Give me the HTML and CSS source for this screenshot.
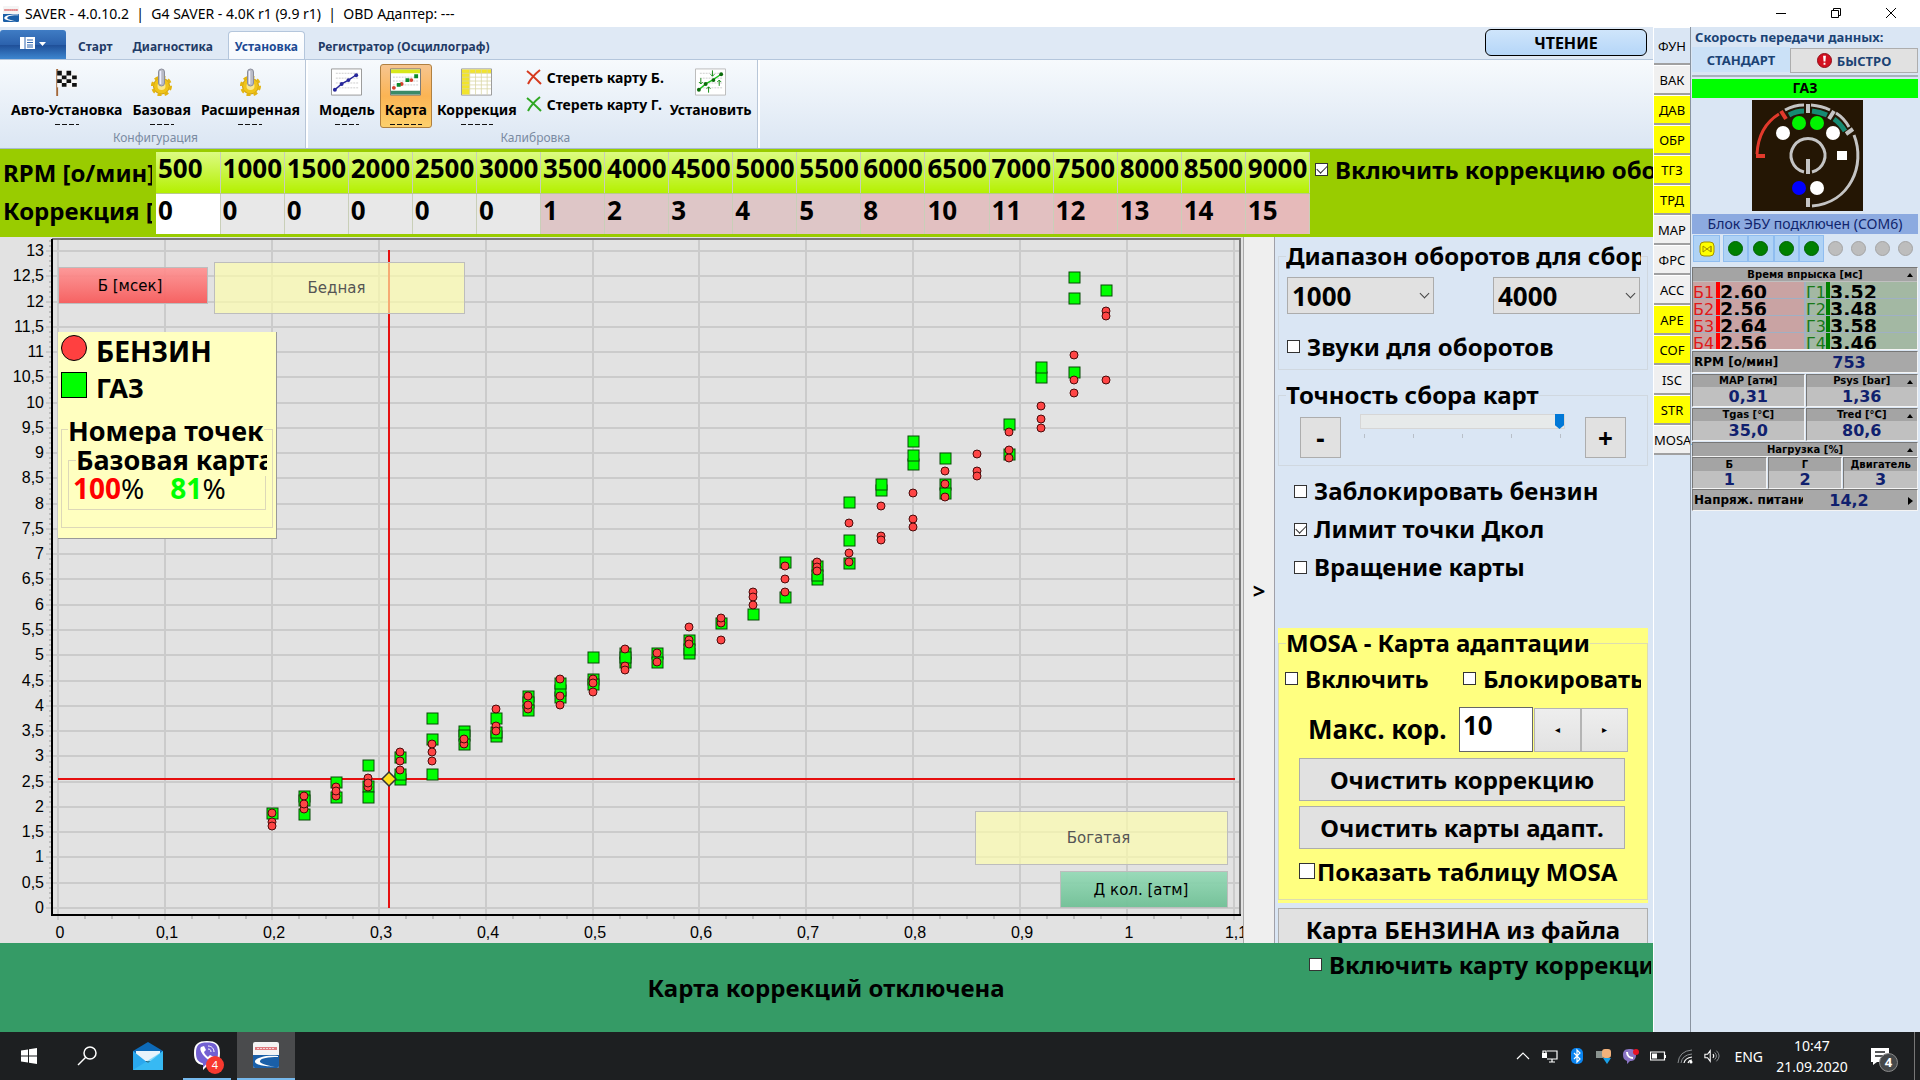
FILE: index.html
```html
<!DOCTYPE html>
<html lang="ru">
<head>
<meta charset="utf-8">
<title>SAVER - 4.0.10.2</title>
<link rel="stylesheet" href="styles.css">
</head>
<body>
<svg class="defs" aria-hidden="true">
  <defs>
    <symbol id="logo" viewBox="0 0 26 26"><rect width="26" height="26" rx="2" fill="#f4f4f4"/><path d="M0 13h26v11q0 2-2 2H2q-2 0-2-2z" fill="#1a5fa8"/><path d="M25 14C14 13 4 15 2 19c-1 4 10 5 20 6C12 23 6 21 7 19c1-3 8-4 18-4z" fill="#fff"/><path d="M2 5h22v3H2z" fill="#d9535a" opacity=".75"/><path d="M4 6.500h18" stroke="#fff" stroke-dasharray="2 1" opacity=".7"/></symbol>
    <symbol id="gear" viewBox="0 0 24 28"><circle cx="12" cy="18" r="8" fill="#f0c419" stroke="#c79a10" stroke-width="1"/><circle cx="12" cy="18" r="9" fill="none" stroke="#e3b512" stroke-width="3" stroke-dasharray="4 3"/><circle cx="12" cy="18" r="4" fill="#fbe88a"/><rect x="9" y="1" width="6" height="17" rx="3" fill="#b9bbc6" stroke="#8a8c99"/><path d="M11 3v13" stroke="#eef" stroke-width="1.500"/></symbol>
    <symbol id="cross" viewBox="0 0 16 16"><path d="M1 2c5 4 9 8 14 13M14 1C9 5 5 9 2 15" fill="none" stroke="currentColor" stroke-width="2"/></symbol>
    <symbol id="viber" viewBox="0 0 28 30"><path d="M14 1c9 0 13 3 13 12s-4 12-12 12l-5 5v-5C3 24 1 20 1 13 1 4 5 1 14 1z" fill="#fff"/><path d="M14 2.500c8 0 11 2 11 10.500s-4 10.500-11 10.500l-4 4v-4C5 22 3 19 3 13 3 5 6 2.500 14 2.500z" fill="#7360d2"/><path d="M8 7l3-1 2 4-2 2c1 3 3 4 4 5l2-2 4 2-1 3c-2 2-5 0-8-3S6 9 8 7z" fill="#fff"/><path d="M15 6c4 0 6 3 6 6M15 9c2 0 3 1 3 3" fill="none" stroke="#fff"/></symbol>
  </defs>
</svg>

<header class="titlebar">
  <svg class="titlebar-logo"><use href="#logo"/></svg>
  <span class="titlebar-text">SAVER - 4.0.10.2&nbsp; |&nbsp; G4 SAVER - 4.0K r1 (9.9 r1)&nbsp; |&nbsp; OBD Адаптер: ---</span>
  <div class="window-buttons">
    <button aria-label="Свернуть"><svg viewBox="0 0 12 12"><path d="M1 6.500h10"/></svg></button>
    <button aria-label="Восстановить"><svg viewBox="0 0 12 12"><path d="M1.500 3.500h7v7h-7zM3.500 3V1.500h7v7H9"/></svg></button>
    <button aria-label="Закрыть"><svg viewBox="0 0 12 12"><path d="M1 1l10 10M11 1L1 11"/></svg></button>
  </div>
</header>

<div class="workspace">
  <main class="work">
    <nav class="ribbon-tabs">
      <button class="app-menu" aria-label="Меню"><svg viewBox="0 0 28 14"><path d="M1 1h15v12H1z" fill="#fff"/><path d="M6 1v12" stroke="#2f65ae"/><path d="M8 4h6M8 6.500h6M8 9h6M8 11h6" stroke="#2f65ae"/><path d="M20 6h7l-3.500 4z" fill="#fff"/></svg></button>
      <button class="tab">Старт</button>
      <button class="tab">Диагностика</button>
      <button class="tab tab-active">Установка</button>
      <button class="tab">Регистратор (Осциллограф)</button>
      <button class="read-button">ЧТЕНИЕ</button>
    </nav>

    <section class="ribbon">
      <div class="ribbon-group">
        <div class="ribbon-items">
          <button class="tool">
            <svg viewBox="0 0 28 30"><path d="M4 1v29" stroke="#a4683a" stroke-width="2"/><path d="M4 3q6-3 11 0t11 0v18q-6 3-11 0T4 21z" fill="#f6f6f6"/><path d="M4 3h5v5H4zM14 3h5v5h-5zM9 8h5v4H9zM20 8h5v4h-5zM4 12h5v4H4zM14 12h5v4h-5zM9 16h5v4H9zM20 16h5v4h-5z" fill="#111"/></svg>
            Авто-Установка<span class="cut w24"></span></button>
          <button class="tool"><svg viewBox="0 0 24 28"><use href="#gear"/></svg>Базовая<span class="cut w24"></span></button>
          <button class="tool"><svg viewBox="0 0 24 28"><use href="#gear"/></svg>Расширенная<span class="cut w24"></span></button>
        </div>
        <div class="ribbon-caption">Конфигурация</div>
      </div>
      <div class="ribbon-group">
        <div class="ribbon-items">
          <button class="tool">
            <svg viewBox="0 0 32 28"><path d="M.5.500h31v27H.5z" fill="#fff" stroke="#999"/><path d="M5 5h24M5 10h24M5 15h24M5 20h24" stroke="#ccc" stroke-dasharray="2 1"/><path d="M4 22l7-6 7-4 9-6" fill="none" stroke="#27279b" stroke-width="1.500"/><g fill="#27279b"><circle cx="4" cy="22" r="2"/><circle cx="11" cy="16" r="2"/><circle cx="18" cy="12" r="2"/><circle cx="26" cy="7" r="2"/></g></svg>
            Модель<span class="cut w24"></span></button>
          <button class="tool tool-active">
            <svg viewBox="0 0 32 28"><path d="M.5.500h31v27H.5z" fill="#fff" stroke="#777"/><path d="M1 1h30v4H1z" fill="#d8e81a"/><path d="M1 23h30v4H1z" fill="#3a8a68"/><path d="M3 9h26M3 13h26M3 17h26" stroke="#ccc" stroke-dasharray="2 1"/><g fill="#d6402c"><circle cx="4" cy="20" r="2"/><circle cx="12" cy="16" r="2"/><circle cx="22" cy="12" r="2"/></g><path d="M7 15h4v4H7zM16 10h4v4h-4zM25 6h4v4h-4z" fill="#0a8a2a"/></svg>
            Карта<span class="cut w32"></span></button>
          <button class="tool">
            <svg viewBox="0 0 32 28"><path d="M.5.500h31v27H.5z" fill="#fff" stroke="#999"/><path d="M1 1h30v4H1zM1 5h8v22H1z" fill="#f2e42c"/><path d="M9 1v26M15 1v26M21 1v26M27 1v26M1 5h30M1 9h30M1 13h30M1 17h30M1 21h30" stroke="#d9d6a4" stroke-width=".800"/></svg>
            Коррекция<span class="cut w32"></span></button>
          <div class="clear-tools">
            <button><svg class="red"><use href="#cross"/></svg>Стереть карту Б.</button>
            <button><svg class="green"><use href="#cross"/></svg>Стереть карту Г.</button>
          </div>
          <button class="tool">
            <svg viewBox="0 0 32 28"><path d="M.5.500h31v27H.5z" fill="#fff" stroke="#bbb"/><path d="M5 5h24M5 10h24M5 15h24M5 20h24" stroke="#ccc" stroke-dasharray="2 1"/><path d="M4 22l7-6 7-4 9-6" fill="none" stroke="#1dc01d" stroke-width="1.500"/><g fill="#0b6b0b"><circle cx="4" cy="22" r="2"/><circle cx="11" cy="16" r="2"/><circle cx="19" cy="12" r="2"/><circle cx="27" cy="6" r="2"/></g><path d="M6 10v6m-2-2l2 2 2-2M18 2v6m-2-2l2 2 2-2M14 25v-6m-2 2l2-2 2 2M25 18v-6m-2 2l2-2 2 2" fill="none" stroke="#128a12"/></svg>
            Установить</button>
        </div>
        <div class="ribbon-caption">Калибровка</div>
      </div>
    </section>

    <section class="rpm">
      <div class="rpm-labels"><span>RPM [о/мин]</span><span>Коррекция [%]</span></div>
      <div class="rpm-grid">
        <table class="rpm-table">
          <tr><th>500</th><th>1000</th><th>1500</th><th>2000</th><th>2500</th><th>3000</th><th>3500</th><th>4000</th><th>4500</th><th>5000</th><th>5500</th><th>6000</th><th>6500</th><th>7000</th><th>7500</th><th>8000</th><th>8500</th><th>9000</th></tr>
          <tr><td class="current">0</td><td>0</td><td>0</td><td>0</td><td>0</td><td>0</td><td class="p1">1</td><td class="p1">2</td><td class="p1">3</td><td class="p1">4</td><td class="p1">5</td><td class="p2">8</td><td class="p2">10</td><td class="p2">11</td><td class="p3">12</td><td class="p3">13</td><td class="p3">14</td><td class="p3">15</td></tr>
        </table>
      </div>
      <label class="check rpm-check"><input type="checkbox" checked><span>Включить коррекцию оборотов</span></label>
    </section>

    <div class="middle">
      <section class="chart">
        <svg id="plot" viewBox="0 237 1243 706" role="img" aria-label="Карта"></svg>
        <div class="tag tag-petrol">Б [мсек]</div>
        <div class="tag tag-lean">Бедная</div>
        <div class="tag tag-rich">Богатая</div>
        <div class="tag tag-map">Д кол. [атм]</div>
        <aside class="legend">
          <div class="legend-row"><i class="dot"></i>БЕНЗИН</div>
          <div class="legend-row"><i class="box"></i>ГАЗ</div>
          <fieldset class="points"><legend>Номера точек</legend>
            <fieldset class="base"><legend>Базовая карта</legend>
              <div class="percents"><span><b class="petrol">100</b>%</span><span><b class="gas">81</b>%</span></div>
            </fieldset>
          </fieldset>
        </aside>
      </section>
      <button class="splitter" aria-label="Скрыть панель">&gt;</button>
      <section class="settings">
        <fieldset class="group">
          <legend>Диапазон оборотов для сбора</legend>
          <div class="selects">
            <span class="select"><select aria-label="От"><option>1000</option></select></span>
            <span class="select"><select aria-label="До"><option>4000</option></select></span>
          </div>
          <label class="check"><input type="checkbox"><span>Звуки для оборотов</span></label>
        </fieldset>
        <fieldset class="group accuracy">
          <legend>Точность сбора карт</legend>
          <div class="slider-row">
            <button class="step">-</button>
            <div class="slider"><input type="range" min="0" max="4" value="4" aria-label="Точность"><div class="ticks"><i></i><i></i><i></i><i></i><i></i></div></div>
            <button class="step">+</button>
          </div>
        </fieldset>
        <div class="options">
          <label class="check"><input type="checkbox"><span>Заблокировать бензин</span></label>
          <label class="check"><input type="checkbox" checked><span>Лимит точки Дкол</span></label>
          <label class="check"><input type="checkbox"><span>Вращение карты</span></label>
        </div>
        <div class="mosa">
          <fieldset class="group">
            <legend>MOSA - Карта адаптации</legend>
            <div class="mosa-checks">
              <label class="check"><input type="checkbox"><span>Включить</span></label>
              <label class="check"><input type="checkbox"><span>Блокировать</span></label>
            </div>
            <div class="max">
              <label for="max">Макс. кор.</label>
              <input id="max" type="text" value="10">
              <button aria-label="Меньше">◂</button><button aria-label="Больше">▸</button>
            </div>
            <button class="wide">Очистить коррекцию</button>
            <button class="wide">Очистить карты адапт.</button>
            <label class="check show-table"><input type="checkbox"><span>Показать таблицу MOSA</span></label>
          </fieldset>
        </div>
        <button class="file-button">Карта БЕНЗИНА из файла</button>
      </section>
    </div>

    <footer class="status">
      <strong>Карта коррекций отключена</strong>
      <label class="check"><input type="checkbox"><span>Включить карту коррекций</span></label>
    </footer>
  </main>

  <nav class="modes">
    <button class="mode mode-first">ФУН</button><button class="mode">ВАК</button><button class="mode on">ДАВ</button><button class="mode on">ОБР</button><button class="mode on">ТГЗ</button><button class="mode on">ТРД</button><button class="mode">МАР</button><button class="mode">ФРС</button><button class="mode">ACC</button><button class="mode on">APE</button><button class="mode on">COF</button><button class="mode">ISC</button><button class="mode on">STR</button><button class="mode">MOSA</button>
  </nav>

  <aside class="monitor">
    <h2>Скорость передачи данных:</h2>
    <div class="speed">
      <button class="std">СТАНДАРТ</button>
      <button class="fast"><svg viewBox="0 0 16 16"><circle cx="8" cy="8" r="7.500" fill="#d31020" stroke="#8d0b14"/><path d="M6.500 3h3l-.500 6h-2zM7 10.500h2v2H7z" fill="#fff"/></svg>БЫСТРО</button>
    </div>
    <div class="fuel">ГАЗ</div>
    <svg class="switch" viewBox="0 0 111 111"><rect width="111" height="111" fill="#241604"/>
      <g fill="none" stroke-width="3">
        <path d="M5 54C6 36 14 22 27 14" stroke="#e23a2c"/><path d="M4 56h9M29 11l5 8" stroke="#e23a2c" stroke-width="4"/>
        <path d="M33 10Q42 5 52 5M59 5Q70 6 78 10M84 13Q92 18 97 27M102 35C114 65 98 103 60 106" stroke="#c4c4c4"/>
        <path d="M37 15Q44 11 52 11M60 11Q68 12 75 15M82 19Q88 23 93 31" stroke="#168a72" stroke-width="5"/>
        <path d="M56 4v9M82 11l-5 8M101 29l-7 5M56 59v15M56 98v9" stroke="#c4c4c4" stroke-width="4"/>
        <path d="M52 72A17 17 0 1 1 60 72" stroke="#c4c4c4"/>
      </g>
      <circle cx="47" cy="23" r="7" fill="#00f400"/><circle cx="65" cy="23" r="7" fill="#00f400"/><circle cx="31" cy="33" r="7" fill="#fff"/><circle cx="81" cy="33" r="7" fill="#fff"/><circle cx="47" cy="88" r="7" fill="#00f"/><circle cx="65" cy="88" r="7" fill="#fff"/><path d="M85 51h10v9H85z" fill="#fff"/>
    </svg>
    <div class="ecu">Блок ЭБУ подключен (COM6)</div>
    <div class="leds">
      <span class="led-cell lit cfg"><svg viewBox="0 0 16 16"><rect x="1" y="1" width="14" height="14" rx="4" fill="#ff0" stroke="#a39000"/><path d="M4 5v6l8-6v6L4 5M12 5v6" fill="none" stroke="#a39000"/></svg></span>
      <span class="led-cell lit"><i class="led"></i></span><span class="led-cell lit"><i class="led"></i></span><span class="led-cell lit"><i class="led"></i></span><span class="led-cell lit"><i class="led"></i></span><span class="led-cell"><i class="led"></i></span><span class="led-cell"><i class="led"></i></span><span class="led-cell"><i class="led"></i></span><span class="led-cell"><i class="led"></i></span>
    </div>

    <div class="panel">
      <h3>Время впрыска [мс]<i class="up"></i></h3>
      <div class="inject">
        <div class="inj petrol-inj"><span>Б1</span><b>2.60</b></div><div class="inj gas-inj"><span>Г1</span><b>3.52</b></div>
        <div class="inj petrol-inj"><span>Б2</span><b>2.56</b></div><div class="inj gas-inj"><span>Г2</span><b>3.48</b></div>
        <div class="inj petrol-inj"><span>Б3</span><b>2.64</b></div><div class="inj gas-inj"><span>Г3</span><b>3.58</b></div>
        <div class="inj petrol-inj"><span>Б4</span><b>2.56</b></div><div class="inj gas-inj"><span>Г4</span><b>3.46</b></div>
      </div>
    </div>
    <div class="panel line"><span>RPM [о/мин]</span><b>753</b></div>
    <div class="cells two">
      <div class="panel"><h3>MAP [атм]</h3><b>0,31</b></div>
      <div class="panel"><h3>Psys [bar]<i class="up"></i></h3><b>1,36</b></div>
      <div class="panel"><h3>Tgas [°C]</h3><b>35,0</b></div>
      <div class="panel"><h3>Tred [°C]<i class="up"></i></h3><b>80,6</b></div>
    </div>
    <div class="panel load"><h3>Нагрузка [%]<i class="up"></i></h3></div>
    <div class="cells three">
      <div class="panel"><h3>Б</h3><b>1</b></div>
      <div class="panel"><h3>Г</h3><b>2</b></div>
      <div class="panel"><h3>Двигатель</h3><b>3</b></div>
    </div>
    <div class="panel line"><span>Напряж. питания</span><b>14,2</b><i class="more"></i></div>
  </aside>
</div>

<footer class="taskbar">
  <button class="task" aria-label="Пуск"><svg viewBox="0 0 16 16" width="16" height="16"><path d="M0 2.500l7-1v6H0zM8 1.300l8-1.200v7.400H8zM0 8.500h7v6l-7-1zM8 8.500h8v7.400l-8-1.200z" fill="#fff"/></svg></button>
  <button class="task" aria-label="Поиск"><svg viewBox="0 0 20 20" width="20" height="20"><circle cx="13" cy="7" r="6" fill="none" stroke="#fff" stroke-width="1.500"/><path d="M9 11l-8 8" stroke="#fff" stroke-width="1.500"/></svg></button>
  <button class="task mail" aria-label="Почта"><svg viewBox="0 0 30 28" width="30" height="28"><path d="M0 9L15 0l15 9v5H0z" fill="#0d6ab8"/><path d="M3 9h24v10H3z" fill="#e8f3fb"/><path d="M0 9l15 12L30 9v19H0z" fill="#2aa8ee"/><path d="M0 28L30 9v19z" fill="#41c4f7" opacity=".6"/></svg></button>
  <button class="task running" aria-label="Viber"><svg width="28" height="30"><use href="#viber"/></svg><span class="badge">4</span></button>
  <button class="task current-task" aria-label="SAVER"><svg width="26" height="26"><use href="#logo"/></svg></button>
  <div class="tray">
    <svg viewBox="0 0 16 16"><path d="M2 11l6-6 6 6" class="ln"/></svg>
    <svg viewBox="0 0 16 16"><path d="M5 3h10v8H5M10 11v3M7 14h6" class="ln"/><path d="M0 5h5v5H0z" fill="#fff"/><path d="M1 5V3h3v2" class="ln"/></svg>
    <svg viewBox="0 0 16 16"><rect x="2" width="12" height="16" rx="5" fill="#0a84f0"/><path d="M5 5l6 6-3 3V2l3 3-6 6" class="ln"/></svg>
    <svg viewBox="0 0 16 16"><path d="M0 3h7v7H0z" fill="#8a9390"/><rect x="6" y="1" width="9" height="9" rx="3" fill="#f3b27c"/><path d="M7 10h8l-4 6z" fill="#1aa0e8"/></svg>
    <svg viewBox="0 0 16 16"><path d="M6 1c5 0 7 1 7 6s-3 6-6 6l-3 3v-3C1 12 0 10 0 7s1-6 6-6z" fill="#8a74c4"/><path d="M4 4c0 4 3 6 6 6" stroke="#fff" stroke-width="2" fill="none"/><circle cx="13" cy="4" r="3" fill="#e81123"/></svg>
    <svg viewBox="0 0 16 16"><path d="M0.500 4h14v8H.5zM15.500 7v3" class="ln"/><path d="M2 5.500h5v5H2z" fill="#fff"/></svg>
    <svg viewBox="0 0 16 16"><g fill="none" stroke="#8b8f92"><path d="M1 15Q2 3 15 2M4 15Q5 7 15 6"/></g><path d="M7 15Q8 10 15 9M11 15q1-3 4-3" class="ln"/><circle cx="14" cy="14" r="1.500" fill="#fff"/></svg>
    <svg viewBox="0 0 18 16"><path d="M1 6h3l3-4v12l-3-4H1zM10 6q2 2 0 4" class="ln"/><path d="M12 4q4 4 0 8M14 2q6 6 0 12" fill="none" stroke="#9a9da0"/></svg>
    <span class="lang">ENG</span>
    <span class="clock">10:47<br>21.09.2020</span>
    <span class="notes"><svg viewBox="0 0 18 18"><path d="M0 1h18v14H6l-4 3v-3H0z" fill="#fff"/><path d="M4 5h10M4 9h8" stroke="#1c1f22" stroke-width="1.500"/></svg><span class="notes-count">4</span></span>
  </div>
</footer>
<script src="chart.js"></script>
</body>
</html>
```
FILE: styles.css
```css
:root {
  --ui: "Noto Sans", "Open Sans", sans-serif;
  --wide-ui: "DejaVu Sans", sans-serif;
  --panel: #dae6f4;
  --lime: #99cc00;
  --green: #359b66;
}
* { box-sizing: border-box; }
body {
  margin: 0;
  min-height: 100vh;
  display: flex;
  flex-direction: column;
  overflow: hidden;
  font-family: var(--ui);
  font-size: 13px;
  color: #000;
  background: var(--panel);
}
button, input, select { font: inherit; color: inherit; }
button { padding: 0; border: 0; background: none; white-space: nowrap; }
fieldset { margin: 0; padding: 0; border: 1px solid #d0d8e0; min-width: 0; }
.defs { position: absolute; width: 0; height: 0; }

.titlebar { display: flex; align-items: center; height: 27px; padding: 0 2px 0 3px; background: #fff; }
.titlebar-logo { width: 16px; height: 16px; margin-right: 6px; }
.titlebar-text { flex: 1; font-size: 14px; white-space: nowrap; }
.window-buttons { display: flex; }
.window-buttons button { width: 55px; height: 24px; }
.window-buttons svg { width: 12px; height: 12px; fill: none; stroke: #000; }

.workspace { flex: 1; display: flex; min-height: 0; }
.work { flex: 1; min-width: 0; display: flex; flex-direction: column; }

/* Ribbon */
.ribbon-tabs { display: flex; height: 33px; align-items: flex-end; background: #dfe9f5; border-bottom: 1px solid #b4c6dc; padding-right: 6px; }
.app-menu { width: 66px; height: 29px; border-radius: 3px 3px 0 0; background: linear-gradient(#3f7cc4, #2c62ad 50%, #1f4f98 52%, #3d86cf); }
.app-menu svg { width: 28px; height: 14px; }
.tab { height: 28px; padding: 2px 9px 0; font-size: 12px; font-weight: 700; color: #1f3b66; border: 1px solid transparent; border-bottom: 0; }
.app-menu + .tab { margin-left: 2px; }
.tab-active { margin: 0 3px 0 5px; background: linear-gradient(#fff, #f4f8fd); color: #1c4a94; border-color: #b4c6dc; border-radius: 4px 4px 0 0; padding: 2px 6px 0; }
.read-button { margin: 0 0 3px auto; width: 162px; height: 27px; border: 1px solid #000; border-radius: 6px; background: linear-gradient(#cfe5fb, #b5d6f8); font-size: 16px; font-weight: 700; line-height: 24px; }
.ribbon { display: flex; height: 89px; background: linear-gradient(#f7fafd, #dbe6f3); border-bottom: 1px solid #a9bccf; flex: none; }
.ribbon-group { display: flex; flex-direction: column; border-right: 2px solid #fff; box-shadow: inset -1px 0 #b8c6d8; padding: 4px 1px 0 6px; }
.ribbon-items { display: flex; height: 65px; }
.tool { display: flex; flex-direction: column; align-items: center; height: 64px; padding: 3px 4px 0; font-size: 14px; font-weight: 700; line-height: 20px; border: 1px solid transparent; border-radius: 3px; overflow: hidden; }
.tool > svg { width: 31px; height: 28px; margin-bottom: 4px; flex: none; }
.tool-active { background: linear-gradient(#f6c590, #fbb454 50%, #fdd06c); border-color: #b08040; }
.cut { height: 1px; margin-top: 4px; flex: none; background: repeating-linear-gradient(90deg, #111 0 5px, transparent 5px 7px); }
.w24 { width: 24px; }
.w32 { width: 32px; }
.clear-tools { display: flex; flex-direction: column; gap: 3px; padding: 1px 1px 0 4px; }
.clear-tools button { display: flex; align-items: center; gap: 5px; height: 24px; font-size: 14px; font-weight: 700; }
.clear-tools svg { width: 16px; height: 16px; }
.red { color: #d63a1e; }
.green { color: #2fa822; }
.ribbon-caption { text-align: center; color: #7a8ba2; font-size: 12px; line-height: 18px; }

/* RPM strip */
.rpm { display: flex; height: 88px; background: var(--lime); padding: 3px 0; font-size: 24px; font-weight: 700; flex: none; }
.rpm-labels { width: 156px; flex: none; padding: 2px 0 0 3px; border-right: 4px solid var(--lime); overflow: hidden; white-space: nowrap; }
.rpm-labels span { display: block; line-height: 38px; overflow: hidden; }
.rpm-grid { flex: 1; min-width: 0; }
.rpm-table { width: 100%; border-collapse: collapse; table-layout: fixed; height: 82px; font-size: 26px; }
.rpm-table th, .rpm-table td { padding: 0 0 8px 2px; border-right: 1px solid #c9cfb8; text-align: left; font-weight: 700; line-height: 32px; height: 41px; }
.rpm-table th { background: linear-gradient(#dcfb83, #b4f000); border-bottom: 1px solid #b8c890; }
.rpm-table td { background: #e8e8e8; }
.rpm-table .current { background: #fff; }
.rpm-table .p1 { background: #dec6c7; }
.rpm-table .p2 { background: #e2c0c1; }
.rpm-table .p3 { background: #e6baba; }
.rpm-check { width: 343px; flex: none; padding-left: 5px; align-self: flex-start; height: 34px; overflow: hidden; }

/* Check boxes */
.check { display: flex; align-items: center; gap: 7px; white-space: nowrap; font-weight: 700; }
.check input { appearance: none; flex: none; width: 13px; height: 13px; margin: 0; border: 1px solid #333; background: #fff; display: grid; place-items: center; }
.check input:checked::after { content: ""; width: 9px; height: 5px; margin-top: -2px; border: solid #333; border-width: 0 0 1px 1px; transform: rotate(-45deg); }

/* Chart */
.middle { flex: 1; display: flex; min-height: 0; }
.chart { flex: 1; position: relative; min-width: 0; background: #e2e2e2; overflow: hidden; }
.chart > svg { display: block; width: 100%; height: 100%; position: absolute; inset: 0; }
.axis-text { font: 16px "Liberation Sans", sans-serif; }
.tag { position: absolute; display: grid; place-items: center; padding-right: 6px; font-family: var(--wide-ui); font-size: 15px; border: 1px solid #bdbdbd; }
.tag-petrol { left: 58px; top: 30px; width: 150px; height: 37px; background: linear-gradient(rgba(255, 145, 145, .9), rgba(247, 92, 92, .95)); }
.tag-lean { left: 214px; top: 25px; width: 251px; height: 52px; }
.tag-rich { right: 15px; top: 574px; width: 253px; height: 54px; }
.tag-lean, .tag-rich { background: rgba(255, 255, 170, .65); color: #555; }
.tag-map { right: 15px; top: 634px; width: 168px; height: 37px; background: linear-gradient(rgba(145, 217, 180, .9), rgba(112, 192, 150, .95)); }
.legend { position: absolute; left: 58px; top: 95px; width: 219px; height: 207px; padding: 1px 3px; background: #ffffc0; border: solid #999; border-width: 0 1px 1px 0; font-size: 27px; font-weight: 700; }
.legend-row { display: flex; align-items: center; gap: 9px; height: 37px; line-height: 32px; padding-bottom: 1px; font-size: 28px; }
.legend-row + .legend-row { font-size: 27px; }
.dot, .box { width: 26px; height: 26px; margin-bottom: 6px; border: 1px solid #000; }
.dot { border-radius: 50%; background: #ff4040; }
.box { background: #0f0; }
.points, .base { border-color: #ddd8b8; }
.points { height: 113px; margin-top: 8px; padding: 0 6px; }
.points legend { padding: 0; line-height: 32px; height: 32px; white-space: nowrap; overflow: hidden; }
.points > legend { height: 29px; }
.base { height: 66px; }
.base legend { width: 191px; margin-left: 7px; }
.percents { display: flex; gap: 26px; padding-left: 4px; margin-top: -4px; font-size: 28px; line-height: 32px; font-weight: 400; }
.petrol { color: #f00; }
.gas { color: #0f0; }

.splitter { width: 32px; flex: none; background: #efefef; border-right: 1px solid #a0a0a8; border-left: 1px solid #aaa; font-size: 22px; font-weight: 700; }

/* Settings */
.settings { width: 378px; flex: none; padding: 2px 5px 0 3px; background: var(--panel); font-size: 24px; font-weight: 700; height: 706px; overflow: hidden; }
.group { padding: 0 8px; height: 131px; }
.group legend { padding: 0; line-height: 34px; max-width: 355px; overflow: hidden; white-space: nowrap; margin-left: -1px; }
.selects { display: flex; justify-content: space-between; padding: 4px 0 0; margin-right: -1px; }
.select { width: 147px; height: 37px; display: grid; align-items: center; font-size: 26px; }
.select > *, .select::after { grid-area: 1 / 1; }
.select::after { content: ""; justify-self: end; margin: -4px 6px 0 0; width: 6px; height: 6px; border: solid #444; border-width: 0 1px 1px 0; transform: rotate(45deg); }
.select select { appearance: none; width: 100%; height: 37px; padding: 0 4px; border: 1px solid #acacac; border-radius: 0; background: #e1e1e1; font-weight: 700; }
.group > .check { height: 34px; margin-top: 15px; }
.accuracy { height: 88px; margin-top: 8px; }
.slider-row { display: flex; align-items: flex-start; justify-content: space-between; padding: 4px 13px 0; }
.step { width: 41px; height: 41px; background: #e1e1e1; border: 1px solid #adadad; font-size: 26px; margin-top: 1px; font-weight: 700; line-height: 36px; }
.slider { flex: 1; margin: -2px 20px 0 19px; }
.slider input { appearance: none; display: block; width: 100%; height: 15px; margin: 0; background: #e7eaea; border: 1px solid #d6d6d6; }
.slider input::-webkit-slider-thumb { appearance: none; width: 9px; height: 15px; background: #0078d7; clip-path: polygon(0 0, 100% 0, 100% 75%, 50% 100%, 0 75%); }
.ticks { display: flex; justify-content: space-between; padding: 5px 4px 0; }
.ticks i { width: 1px; height: 4px; background: #b8bfc8; }
.options { display: grid; padding: 6px 0 0 16px; height: 162px; align-content: start; }
.options .check { height: 38px; line-height: 36px; }
.mosa { background: #ffff80; height: 275px; padding-bottom: 1px; }
.mosa .group { height: 272px; border-color: #ddddb0; padding: 0 6px; }
.mosa legend { margin-left: 1px; line-height: 30px; }
.mosa-checks { display: grid; grid-template-columns: 178px 1fr; height: 36px; align-items: center; margin-top: 2px; }
.mosa-checks .check { overflow: hidden; }
.max { display: flex; align-items: center; margin: 11px 13px 6px 23px; height: 45px; font-size: 26px; }
.max label { flex: 1; white-space: nowrap; line-height: 34px; padding-bottom: 2px; }
.max input { width: 74px; height: 45px; border: 1px solid #666; padding: 0 3px 10px; background: #fff; font-weight: 700; margin-right: 1px; }
.max button { width: 47px; height: 44px; border: 1px solid #b4b4b4; background: linear-gradient(#eee, #e2e2e2); font: 10px var(--wide-ui); }
.wide { display: block; width: 326px; height: 43px; margin: 0 0 5px 14px; background: #e1e1e1; border: 1px solid #adadad; font-weight: 700; }
.mosa .show-table { margin: 5px 0 0 14px; gap: 2px; }
.show-table input { width: 16px; height: 16px; }
.file-button { display: block; width: 100%; height: 44px; margin-top: 5px; padding-bottom: 2px; background: #e1e1e1; border: 1px solid #adadad; font-weight: 700; }

.status { display: flex; height: 89px; flex: none; background: var(--green); font-size: 24px; align-items: flex-start; }
.status strong { flex: 1; align-self: center; text-align: center; padding-left: 343px; }
.status .check { width: 342px; margin-right: 2px; overflow: hidden; height: 42px; }

/* Mode tabs */
.modes { width: 37px; flex: none; display: flex; flex-direction: column; border-left: 1px solid #fff; }
.mode { height: 30px; font-size: 13px; background: #f0f0f0; border-bottom: 2px solid #a0a0a0; border-top: 1px solid #fff; }
.mode-first { height: 38px; background: #dae6f4; }
.on { background: #ff0; }

/* Monitor */
.monitor { width: 230px; flex: none; padding: 0 2px 0 1px; border-left: 1px solid #8a94a0; display: flex; flex-direction: column; }
.monitor h2 { margin: 0; padding-left: 3px; font-size: 13px; line-height: 20px; color: #1b4374; white-space: nowrap; }
.speed { display: flex; height: 30px; border-bottom: 2px solid #a8b0bc; margin-bottom: 2px; }
.speed button { font-size: 13px; font-weight: 700; color: #1b4374; height: 25px; }
.std { width: 98px; background: #cbe1f7; }
.fast { flex: 1; display: flex; align-items: center; justify-content: center; gap: 5px; background: #e1e1e1; border: 1px solid #adadad; margin-top: 1px; }
.fast svg { width: 15px; height: 15px; }
.fuel { height: 19px; line-height: 18px; background: #0f0; text-align: center; font-weight: 700; font-size: 14px; }
.switch { width: 111px; height: 111px; margin: 2px 0 3px 60px; }
.ecu { height: 20px; line-height: 19px; background: #8caae0; text-align: center; color: #10246c; font-size: 14px; white-space: nowrap; }
.leds { display: flex; height: 27px; margin: 1px 0 5px; padding: 0 1px 0 1px; }
.led-cell { flex: 1; display: grid; place-items: center; }
.lit { background: #afd2f5; border: 1px solid #8fbdf0; }
.cfg { flex: 0 0 27px; margin-right: 3px; }
.cfg svg { width: 16px; height: 16px; }
.led { width: 15px; height: 15px; border-radius: 50%; border: 1px solid #a4a4a4; background: #bdbdbd; }
.lit .led { background: #008000; border-color: #006000; }
.panel { background: #c0c0c0; border: 1px solid #777; border-right-color: #f4f4f4; border-bottom-color: #f4f4f4; font-family: var(--wide-ui); text-align: center; margin-bottom: 1px; }
.panel h3 { margin: 0; position: relative; background: #a4a4a4; font-size: 10px; line-height: 13px; }
.panel > b { display: block; font-size: 16px; line-height: 19px; color: #10206e; }
.two h3 { line-height: 12px; }
.load { margin-bottom: 0; }
.up, .more { position: absolute; right: 4px; top: 5px; border: solid transparent; border-width: 0 3px 4px; border-bottom-color: #000; }
.inject { display: grid; grid-template-columns: 1fr 1fr; background: #9fb0c4; column-gap: 2px; row-gap: 1px; margin-top: 1px; }
.inj { display: flex; height: 16px; overflow: hidden; font-size: 19px; }
.inj span { width: 23px; font-size: 16px; line-height: 21px; text-align: left; }
.inj b { border-left: 4px solid; line-height: 20px; }
.petrol-inj { background: #c9a3a3; }
.petrol-inj span { color: #e01818; }
.petrol-inj b { border-color: #f00; }
.gas-inj { background: #a3b8a3; }
.gas-inj span { width: 20px; color: #187818; }
.gas-inj b { border-color: #008000; }
.line { display: flex; align-items: center; height: 22px; background: #a8a8a8; position: relative; font-size: 12px; font-weight: 700; text-align: left; }
.line span { width: 110px; flex: none; overflow: hidden; white-space: nowrap; padding-left: 1px; }
.line b { width: 92px; text-align: center; }
.line .more { top: 7px; border-width: 4px 0 4px 5px; border-color: transparent transparent transparent #000; }
.cells { display: grid; column-gap: 1px; }
.two { grid-template-columns: 1fr 1fr; }
.three { grid-template-columns: 1fr 1fr 1fr; }
.three .panel > b { line-height: 17px; }
.three .panel { margin-bottom: 0; }

/* Taskbar */
.taskbar { display: flex; height: 48px; background: #1d1f21; color: #fff; }
.task { position: relative; width: 58px; display: grid; place-items: center; }
.mail { margin-left: 3px; }
.running { width: 48px; margin: 0 6px; border-bottom: 2px solid #76b9ed; }
.current-task { background: #4a4b4d; border-bottom: 2px solid #76b9ed; }
.badge { position: absolute; right: 7px; bottom: 4px; width: 18px; height: 18px; border-radius: 50%; background: #f8392f; font-size: 11px; line-height: 17px; }
.tray { margin-left: auto; display: flex; align-items: center; gap: 11px; padding-right: 5px; }
.tray > svg { width: 16px; height: 16px; }
.ln { fill: none; stroke: #fff; stroke-width: 1.2; }
.lang { font-size: 14px; margin-left: 3px; }
.clock { width: 76px; text-align: center; font-size: 14px; line-height: 21px; margin-right: 10px; }
.notes { position: relative; width: 44px; height: 48px; padding: 15px 18px 0 0; border-right: 1px solid #777; display: flex; }
.notes > svg { width: 18px; height: 18px; }
.notes-count { position: absolute; left: 8px; top: 21px; width: 19px; height: 19px; border-radius: 50%; background: #45484a; border: 1px solid #8a8a8a; font-size: 13px; font-weight: 700; line-height: 17px; text-align: center; }
```
FILE: chart.js
```js
// Collected points: [manifold pressure, petrol marks, gas marks]; marks are plot ordinates.
const columns = [
  [0.20, [822, 826, 813], [813]],
  [0.23, [809, 796, 804], [796, 800, 814]],
  [0.26, [787, 796, 791], [782, 797]],
  [0.29, [778, 787, 783], [765, 786, 797]],
  [0.32, [752, 761, 770], [757, 779, 774]],
  [0.35, [744, 752, 761], [718, 739, 774]],
  [0.38, [744, 739], [731, 735, 744]],
  [0.41, [709, 726, 731], [718, 736, 732]],
  [0.44, [696, 709, 705], [696, 702, 710]],
  [0.47, [679, 696, 705], [697, 690, 683]],
  [0.50, [679, 683, 692], [657, 679, 684]],
  [0.53, [649, 666, 670], [653, 662, 657]],
  [0.56, [653, 662], [653, 662]],
  [0.59, [627, 640, 644], [640, 653, 649]],
  [0.62, [623, 618, 640], [623]],
  [0.65, [592, 597, 605], [614]],
  [0.68, [566, 579, 592], [562, 597]],
  [0.71, [562, 567, 571], [566, 579, 575]],
  [0.74, [523, 553, 562], [502, 540, 563]],
  [0.77, [506, 536, 540], [490, 484]],
  [0.80, [493, 519, 527], [441, 464, 455]],
  [0.83, [471, 484, 497], [458, 484, 493]],
  [0.86, [454, 471, 476], []],
  [0.89, [432, 450, 458], [424, 454]],
  [0.92, [406, 419, 428], [377, 367]],
  [0.95, [355, 380, 393], [277, 298, 372]],
  [0.98, [311, 316, 380], [290]]
];

const X0 = 58, X1 = 1069, Y0 = 908, Y1 = 50.54;
const px = v => Math.round(X0 + v * X1);
const py = v => Math.round(Y0 - v * Y1);
const text = v => String(v).replace(".", ",");
const out = [];
const line = (x1, y1, x2, y2, color, w) =>
  out.push(`<path d="M${x1} ${y1}L${x2} ${y2}" stroke="${color}" stroke-width="${w}"/>`);

for (let i = 0; i <= 11; i++) {
  const x = px(i / 10);
  line(x, 239, x, 920, "#cbcbcb", 2);
  for (let k = 1; k < 4 && i < 11; k++) line(x + k * 27, 916, x + k * 27, 919, "#999", 1);
  out.push(`<text class="axis-text" x="${x + 2}" y="938" text-anchor="middle">${text(i / 10)}</text>`);
}
for (let i = 0; i <= 26; i++) {
  const y = py(i / 2);
  line(46, y, 1240, y, "#cbcbcb", 2);
  for (let k = 1; k < 5; k++) line(49, y - k * 5, 52, y - k * 5, "#999", 1);
  out.push(`<text class="axis-text" x="44" y="${y + 5}" text-anchor="end">${text(i / 2)}</text>`);
}
line(52, 239, 1241, 239, "#777", 2);
line(1240, 239, 1240, 915, "#777", 2);
line(52, 239, 52, 916, "#000", 2);
line(52, 915, 1241, 915, "#000", 2);
line(389, 250, 389, 908, "#e60f0f", 2);
line(58, 779, 1235, 779, "#e60f0f", 2);

for (const [v, petrol, gas] of columns) {
  const x = px(v);
  for (const y of gas)
    out.push(`<rect x="${x - 5}" y="${y - 5}" width="11" height="11" fill="#0f0" stroke="#064a06"/>`);
  for (const y of petrol)
    out.push(`<circle cx="${x}" cy="${y}" r="4" fill="#ff4545" stroke="#4a0a0a"/>`);
}
out.push('<path d="M389 772l7 7-7 7-7-7z" fill="#ffe01a" stroke="#333" stroke-width="1.5"/>');
document.getElementById("plot").innerHTML = out.join("");
```
